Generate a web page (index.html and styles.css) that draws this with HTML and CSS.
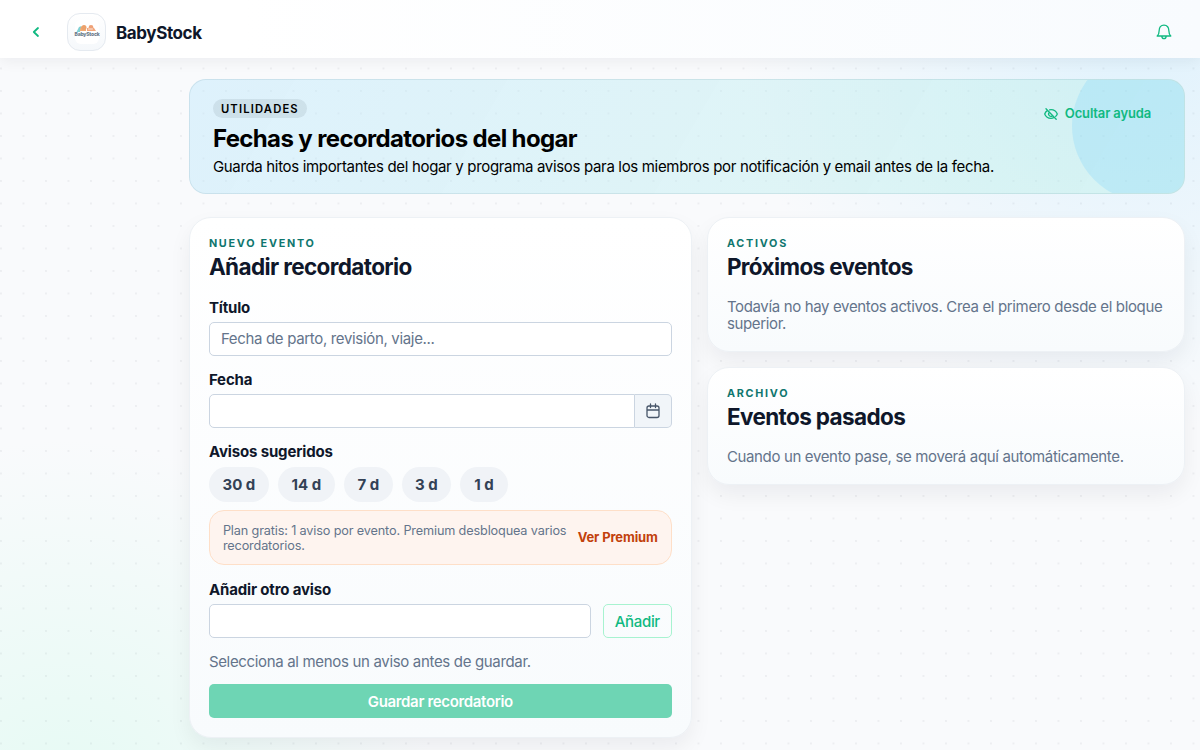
FILE: index.html
```
<!DOCTYPE html>
<html lang="es">
<head>
  <meta charset="UTF-8" />
  <meta name="viewport" content="width=device-width, initial-scale=1.0" />
  <title>BabyStock</title>
  <link rel="stylesheet" href="styles.css">
</head>
<body>
  <header class="topbar">
    <button class="icon-btn back" aria-label="Volver">
      <svg width="8" height="12" viewBox="0 0 8 12"><path d="M6 2 1.800 6 6 10" /></svg>
    </button>
    <div class="logo">
      <svg width="26" height="24" viewBox="0 0 26 24">
        <rect x="1" width="24" height="24" rx="6" fill="#fff" />
        <path d="M2.500 12 5 7l2.500-1L6 12z" fill="#7fd0d3" />
        <path d="M6 11c0-3 1-5 3-5s3 2 3 5z" fill="#f3aa70" />
        <circle cx="10" cy="7.500" r="2.500" fill="#eca16b" />
        <path d="M13 11V8h7l2 3z" fill="#f2a67a" />
        <circle cx="17" cy="7.500" r="2.400" fill="#efa177" />
        <path d="M14.500 9h4" stroke="#fff" stroke-width=".8" />
        <text x="13" y="15.500" text-anchor="middle" class="logo-text">BabyStock</text>
      </svg>
    </div>
    <span class="brand">BabyStock</span>
    <button class="icon-btn bell" aria-label="Notificaciones">
      <svg width="16" height="16" viewBox="0 0 16 16"><path d="M1.200 12h13.600c-1.400-1.200-1.900-2.700-1.900-5C12.900 3.300 11.200 1.200 8 1.200S3.100 3.300 3.100 7c0 2.300-.5 3.800-1.900 5zM5.800 12.300c.2 1.600 1 2.400 2.200 2.400s2-.8 2.200-2.400" /></svg>
    </button>
  </header>

  <main class="page">
    <section class="hero">
      <div>
        <span class="hero-tag">UTILIDADES</span>
        <h1>Fechas y recordatorios del hogar</h1>
        <p>Guarda hitos importantes del hogar y programa avisos para los miembros por notificación y email antes de la fecha.</p>
      </div>
      <button class="help-btn">
        <svg width="14" height="14" viewBox="0 0 14 14"><path d="M2 1.800l10.200 10.400M3.600 3.400C2.200 4.200 1.100 5.600.7 7c.9 2.300 3.300 4.300 6.300 4.300 1 0 1.900-.2 2.700-.6M5.600 2.800c.5-.1.900-.1 1.400-.1 3 0 5.400 2 6.300 4.300-.4.900-.9 1.700-1.600 2.400M5.300 5.400A2.300 2.300 0 0 0 8.500 8.700" /></svg>
        <span>Ocultar ayuda</span>
      </button>
    </section>

    <div class="columns">
      <section class="card">
        <p class="eyebrow">NUEVO EVENTO</p>
        <h2>Añadir recordatorio</h2>

        <form class="form">
          <div class="field">
            <label for="title">Título</label>
            <input id="title" type="text" placeholder="Fecha de parto, revisión, viaje...">
          </div>
          <div class="field">
            <label for="date">Fecha</label>
            <div class="date-group">
              <input id="date" type="text">
              <button type="button" class="date-btn" aria-label="Abrir calendario">
                <svg width="14" height="16" viewBox="0 0 14 16"><path d="M3 3h8a2 2 0 0 1 2 2v7.500a2 2 0 0 1-2 2H3a2 2 0 0 1-2-2V5a2 2 0 0 1 2-2zM1 7h12M4.500 1v3.500M9.500 1v3.500" /></svg>
              </button>
            </div>
          </div>
          <div class="field">
            <label>Avisos sugeridos</label>
            <div class="chips">
              <button type="button" class="chip chip-30">30 d</button>
              <button type="button" class="chip chip-14">14 d</button>
              <button type="button" class="chip">7 d</button>
              <button type="button" class="chip">3 d</button>
              <button type="button" class="chip chip-1">1 d</button>
            </div>
            <div class="plan">
              <p>Plan gratis: 1 aviso por evento. Premium desbloquea varios recordatorios.</p>
              <a>Ver Premium</a>
            </div>
          </div>
          <div class="field">
            <label for="other">Añadir otro aviso</label>
            <div class="add-row">
              <input id="other" type="text">
              <button type="button" class="add-btn">Añadir</button>
            </div>
          </div>
          <p class="muted">Selecciona al menos un aviso antes de guardar.</p>
          <button type="button" class="save-btn">Guardar recordatorio</button>
        </form>
      </section>

      <div class="side">
        <section class="card">
          <p class="eyebrow">ACTIVOS</p>
          <h2>Próximos eventos</h2>
          <p class="muted">Todavía no hay eventos activos. Crea el primero desde el bloque superior.</p>
        </section>
        <section class="card">
          <p class="eyebrow">ARCHIVO</p>
          <h2>Eventos pasados</h2>
          <p class="muted">Cuando un evento pase, se moverá aquí automáticamente.</p>
        </section>
      </div>
    </div>
  </main>
</body>
</html>
```
FILE: styles.css
```
* {
  box-sizing: border-box;
}
body {
  margin: 0;
  height: 750px;
  overflow: hidden;
  font-family: Inter, "Liberation Sans", sans-serif;
  font-size: 15px;
  line-height: 17px;
  letter-spacing: -0.33px;
  color: #0f172a;
  background:
    radial-gradient(circle at 1px 1px, rgba(15, 23, 42, 0.05) 0.9px, transparent 1.2px) 0 0 / 22.5px 22.5px,
    radial-gradient(circle at 1140px 30px, rgba(186, 230, 253, 0.4), transparent 400px),
    radial-gradient(circle at 65px 810px, rgba(209, 250, 235, 0.5), transparent 370px),
    #f9fafc;
}
h1, h2, p {
  margin: 0;
}
button, input {
  font: inherit;
  letter-spacing: inherit;
}
button {
  border: 0;
  padding: 0;
  background: none;
}
svg {
  display: block;
  fill: none;
  stroke: currentColor;
  stroke-width: 1.3;
  stroke-linecap: round;
  stroke-linejoin: round;
}

/* Header */
.topbar {
  position: relative;
  display: flex;
  align-items: center;
  height: 58px;
  padding: 6px 28px 0 32px;
  background: linear-gradient(90deg, #fff 20%, #f8fbfe);
  box-shadow: 0 3px 14px rgba(15, 23, 42, 0.06);
}
.icon-btn {
  color: #10b981;
}
.back svg {
  stroke-width: 1.8;
}
.logo {
  display: flex;
  align-items: center;
  justify-content: center;
  width: 39px;
  height: 38px;
  margin-left: 27px;
  border: 1px solid #e5eaf0;
  border-radius: 13px;
  background: linear-gradient(#fff, #f5f8fb);
}
.logo svg {
  stroke: none;
}
.logo-text {
  font-size: 5px;
  font-weight: 800;
  letter-spacing: -0.2px;
  fill: #697989;
}
.brand {
  margin-left: 10px;
  padding-top: 2px;
  font-size: 17px;
  font-weight: 700;
  letter-spacing: -0.4px;
}
.bell {
  margin-left: auto;
}

.page {
  padding: 21px 15px 0 189.4px;
}

/* Hero */
.hero {
  position: relative;
  display: flex;
  justify-content: space-between;
  align-items: flex-start;
  height: 115px;
  padding: 19px 33px 0 22.5px;
  border: 1px solid rgba(15, 90, 110, 0.1);
  border-radius: 17px;
  overflow: hidden;
  color: #000;
  background: linear-gradient(120deg, rgba(186, 230, 253, 0.42), rgba(184, 240, 228, 0.4)) border-box;
}
.hero::after {
  content: "";
  position: absolute;
  top: -30px;
  right: -40px;
  width: 152px;
  height: 152px;
  border-radius: 50%;
  background: rgba(125, 211, 252, 0.28);
}
.hero-tag {
  display: block;
  width: 94px;
  height: 19px;
  border-radius: 10px;
  background: rgba(15, 23, 42, 0.08);
  font-size: 11.25px;
  font-weight: 600;
  line-height: 20px;
  letter-spacing: 1.15px;
  text-align: center;
}
.hero h1 {
  margin-top: 6px;
  font-size: 24px;
  font-weight: 700;
  line-height: 30px;
  letter-spacing: -0.63px;
}
.hero p {
  margin-top: 4px;
  line-height: 18px;
  white-space: nowrap;
}
.help-btn {
  position: relative;
  z-index: 1;
  display: flex;
  align-items: center;
  gap: 7px;
  margin-top: 6px;
  color: #10b981;
  font-size: 13px;
  font-weight: 600;
  letter-spacing: -0.15px;
}

/* Cards */
.columns {
  display: grid;
  grid-template-columns: 502.4px 1fr;
  align-items: start;
  gap: 15.6px;
  margin-top: 23px;
}
.side {
  display: grid;
  gap: 15.5px;
}
.card {
  padding: 18.5px 19px 18.5px 18.5px;
  border: 1px solid #edf1f5;
  border-radius: 22px;
  background: linear-gradient(#fff, #f8fbfd);
  box-shadow: 0 10px 22px rgba(15, 23, 42, 0.06);
}
.eyebrow {
  color: #0f766e;
  font-size: 10.8px;
  font-weight: 700;
  line-height: 13px;
  letter-spacing: 1.75px;
}
.card h2 {
  margin-top: 3px;
  font-size: 22.5px;
  font-weight: 700;
  line-height: 27px;
  letter-spacing: -0.62px;
}
.muted {
  color: #64748b;
}
.side .muted {
  margin-top: 18.5px;
  letter-spacing: -0.35px;
}

/* Form */
.form {
  display: grid;
  gap: 14px;
  margin-top: 18.5px;
}
.field {
  display: grid;
  gap: 6px;
}
.field label {
  padding: 0.5px 0;
  font-weight: 700;
  line-height: 17px;
  letter-spacing: -0.15px;
}
input {
  width: 100%;
  min-width: 0;
  height: 34px;
  padding: 0 11px 1px;
  border: 1px solid #cbd5e1;
  border-radius: 5px;
  background: #fff;
  outline: none;
}
input::placeholder {
  color: #64748b;
  opacity: 1;
}
.date-group {
  display: flex;
}
.date-group input {
  border-radius: 5px 0 0 5px;
}
.date-btn {
  display: grid;
  place-items: center;
  flex: 0 0 37px;
  border: 1px solid #cbd5e1;
  border-left: 0;
  border-radius: 0 5px 5px 0;
  background: #f1f5f9;
  color: #475569;
}
.chips {
  display: flex;
  gap: 9px;
  margin-top: 1px;
}
.chip {
  width: 49px;
  height: 35px;
  border-radius: 18px;
  background: #f0f3f7;
  color: #334155;
  font-weight: 700;
  letter-spacing: 0;
}
.chip-30 {
  width: 60px;
}
.chip-14 {
  width: 57px;
}
.chip-1 {
  width: 48px;
}
.plan {
  display: flex;
  align-items: center;
  justify-content: space-between;
  gap: 8px;
  height: 55px;
  margin-top: 2px;
  margin-bottom: 1px;
  padding: 0 13px;
  border: 1px solid #fedfc8;
  border-radius: 15px;
  background: #fef4ef;
  color: #64748b;
  font-size: 13px;
  line-height: 15px;
}
.plan p {
  font-size: 12.7px;
  letter-spacing: -0.15px;
}
.plan a {
  color: #c2410c;
  font-weight: 700;
  letter-spacing: -0.13px;
  white-space: nowrap;
}
.add-row {
  display: flex;
  gap: 12px;
}
.add-btn {
  flex: 0 0 69px;
  border: 1px solid #a7f3d0;
  border-radius: 5px;
  color: #10b981;
  font-weight: 500;
}
.form .muted {
  padding-top: 1px;
  line-height: 17px;
}
.save-btn {
  height: 34px;
  border-radius: 5px;
  background: #6ed5b4;
  color: #fff;
  font-weight: 600;
}
```
